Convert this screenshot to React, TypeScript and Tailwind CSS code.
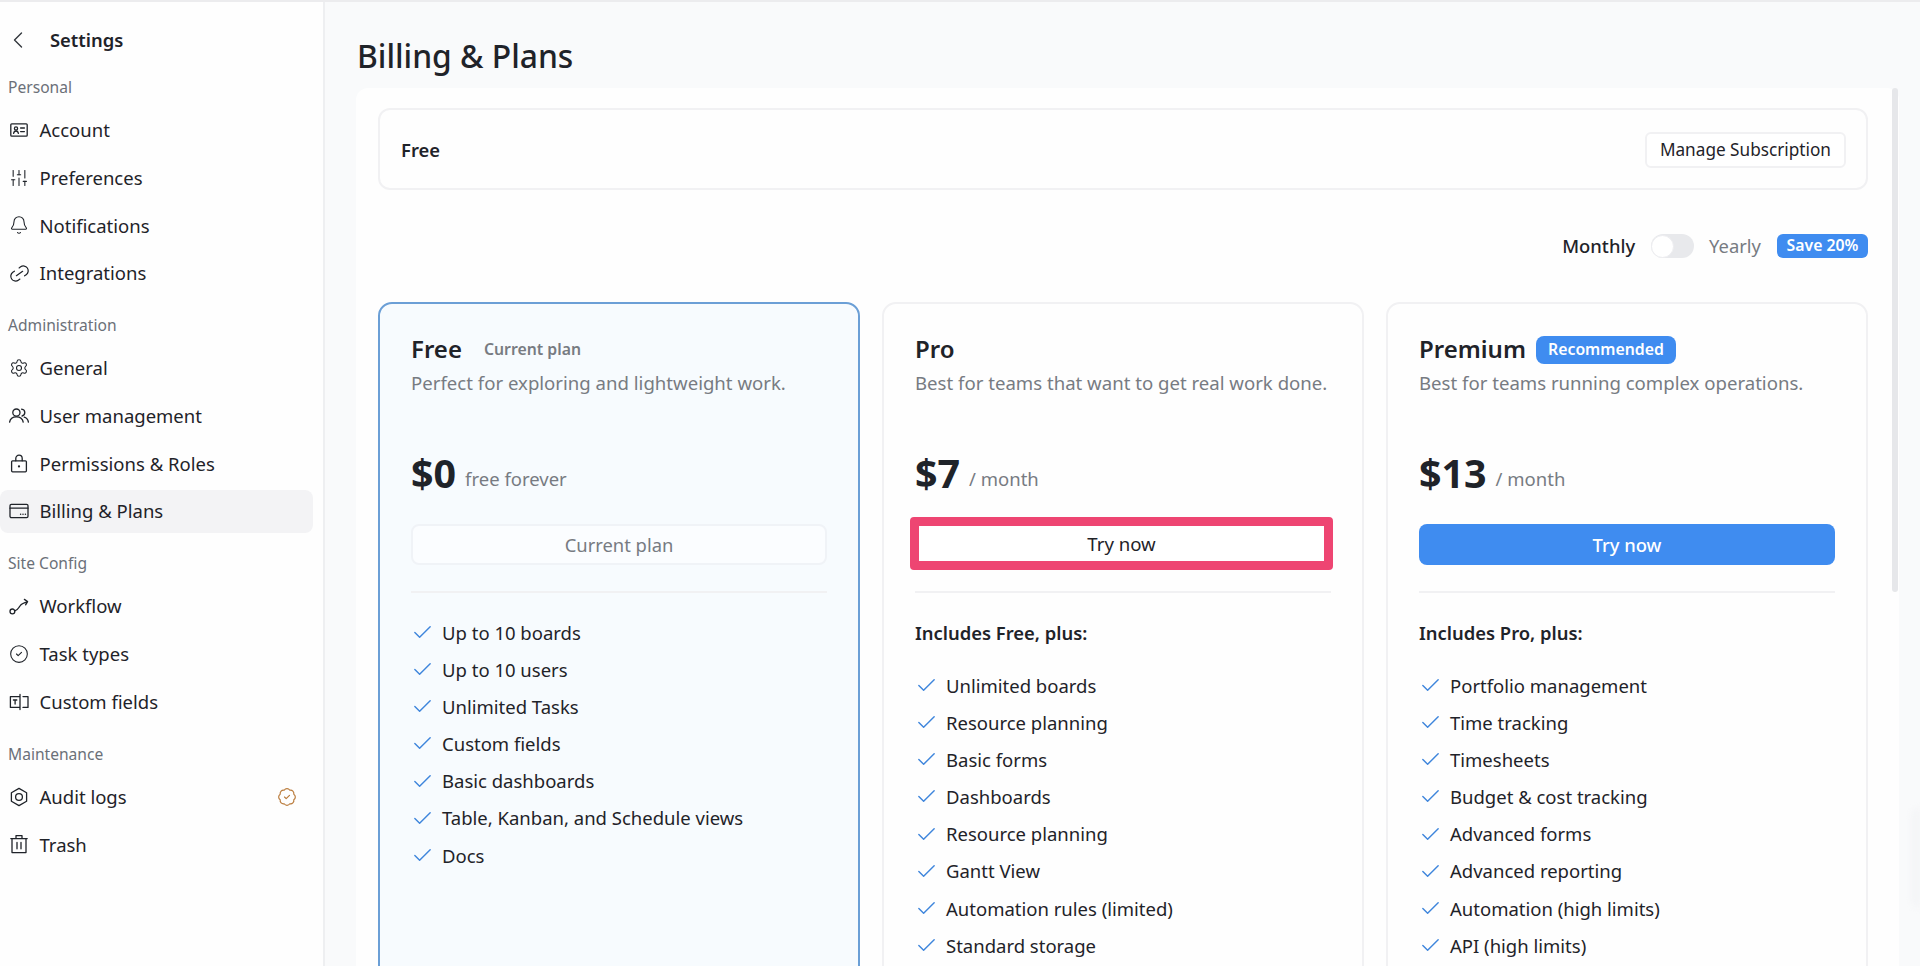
import React from 'react';
import { Bell, CircleCheck, Settings, SlidersVertical, BadgeCheck, Check, ChevronLeft, Link2 } from 'lucide-react';

const IconBase: React.FC<{ children: React.ReactNode }> = ({ children }) => (
  <svg width="22" height="22" viewBox="0 0 22 22" fill="none" stroke="currentColor" strokeWidth="1.3" strokeLinecap="round" strokeLinejoin="round">
    {children}
  </svg>
);

const AccountIcon = () => (
  <IconBase>
    <rect x="2.8" y="4.8" width="16.4" height="12.4" rx="1" />
    <circle cx="8" cy="9.4" r="1.6" />
    <path d="M5.6 14.4c.3-1.6 1.2-2.4 2.4-2.4s2.1.8 2.4 2.4M12.6 9h3.8M12.6 12.6h3.8" />
  </IconBase>
);

const UsersIcon = () => (
  <IconBase>
    <circle cx="8.4" cy="7.6" r="3.6" />
    <path d="M1.6 17.2c.5-3.2 3.2-5.4 6.8-5.4s6.3 2.2 6.8 5.4M13.6 4.2c1.9.2 3.2 1.6 3.2 3.4 0 1.7-1.1 3-2.7 3.4M16.2 12.2c2.3.6 3.8 2.4 4.2 5" />
  </IconBase>
);

const LockIcon = () => (
  <IconBase>
    <rect x="3.6" y="7.8" width="14.8" height="11" rx="1" />
    <path d="M7.8 7.8V5.4a3.2 3.2 0 0 1 6.4 0v2.4" />
    <circle cx="11" cy="13.4" r=".5" fill="currentColor" />
  </IconBase>
);

const BillingIcon = () => (
  <IconBase>
    <rect x="2" y="4.4" width="18" height="13.2" rx="1.4" />
    <path d="M2 8.2h18" />
    <path d="M12.6 14.2h.01M15 14.2h.01M17.4 14.2h.01" strokeWidth="1.5" />
  </IconBase>
);

const WorkflowIcon = () => (
  <IconBase>
    <circle cx="4.4" cy="16.4" r="2.4" />
    <path d="M6.8 15.8c3.2-.6 3.6-3 5.2-5 1.2-1.6 3.6-3.2 7.4-4M16.4 4.4l3.2 2.2-2 3.2" />
  </IconBase>
);

const FieldsIcon = () => (
  <IconBase>
    <path d="M12 5.6H2.4v10.8H12zM12 3.4v15.2M15 5.6h5v10.8h-5" />
    <path d="M5.4 9h3.4M7.1 9v4" />
  </IconBase>
);

const AuditIcon = () => (
  <IconBase>
    <path d="M11 2.4l7.6 4.3v8.6L11 19.6l-7.6-4.3V6.7z" />
    <circle cx="11" cy="11" r="3.4" />
  </IconBase>
);

const TrashIcon = () => (
  <IconBase>
    <path d="M4 5.6h14v14H4zM2.8 5.6h16.4M8 5.6V2.6h6v3M9 9.4v6.4M13 9.4v6.4" />
  </IconBase>
);

type NavEntry = { label: string; icon: React.ReactNode; active?: boolean; badge?: boolean };

const sections: { title: string; items: NavEntry[] }[] = [
  {
    title: 'Personal',
    items: [
      { label: 'Account', icon: <AccountIcon /> },
      { label: 'Preferences', icon: <SlidersVertical size={20} strokeWidth={1.3} /> },
      { label: 'Notifications', icon: <Bell size={20} strokeWidth={1.3} /> },
      { label: 'Integrations', icon: <Link2 size={23} strokeWidth={1.3} className="-rotate-[35deg]" /> },
    ],
  },
  {
    title: 'Administration',
    items: [
      { label: 'General', icon: <Settings size={20} strokeWidth={1.3} /> },
      { label: 'User management', icon: <UsersIcon /> },
      { label: 'Permissions & Roles', icon: <LockIcon /> },
      { label: 'Billing & Plans', icon: <BillingIcon />, active: true },
    ],
  },
  {
    title: 'Site Config',
    items: [
      { label: 'Workflow', icon: <WorkflowIcon /> },
      { label: 'Task types', icon: <CircleCheck size={20} strokeWidth={1.3} /> },
      { label: 'Custom fields', icon: <FieldsIcon /> },
    ],
  },
  {
    title: 'Maintenance',
    items: [
      { label: 'Audit logs', icon: <AuditIcon />, badge: true },
      { label: 'Trash', icon: <TrashIcon /> },
    ],
  },
];

const Sidebar: React.FC = () => (
  <aside className="w-[325px] shrink-0 border-r-2 border-[#eeeff1] bg-[#fefefe] text-[#1f2329]">
    <div className="flex h-[75px] items-center pl-[4px]">
      <ChevronLeft size={28} strokeWidth={1.2} className="text-[#33373d]" />
      <span className="ml-[18px] text-[18.4px] font-semibold">Settings</span>
    </div>
    <div className="flex flex-col gap-[18.2px]">
      {sections.map((section) => (
        <div key={section.title}>
          <div className="mb-[9px] h-[20px] pl-[8px] text-[15.6px] leading-[20px] text-[#6b7078]">{section.title}</div>
          {section.items.map((item) => (
            <div key={item.label} className="flex h-[47.75px] items-center">
              <div className={`flex h-[43px] w-[313px] items-center rounded-lg pl-[7px] pr-[16px] ${item.active ? 'bg-[#f3f3f5]' : ''}`}>
                <span className="flex w-[24px] justify-center">{item.icon}</span>
                <span className="ml-[8.5px] text-[18.5px]">{item.label}</span>
                {item.badge && <BadgeCheck size={20} strokeWidth={1.4} className="ml-auto text-[#b97a3a]" />}
              </div>
            </div>
          ))}
        </div>
      ))}
    </div>
  </aside>
);

const FeatureList: React.FC<{ items: string[] }> = ({ items }) => (
  <ul>
    {items.map((item, i) => (
      <li key={i} className="flex h-[37.15px] items-center gap-[8px] text-[18.5px] text-[#1f2329]">
        <Check size={23} strokeWidth={1.5} className="shrink-0 text-[#3f86dc]" />
        <span>{item}</span>
      </li>
    ))}
  </ul>
);

const PlanName: React.FC<{ children: React.ReactNode }> = ({ children }) => (
  <span className="-mt-[2px] text-[24px] leading-[28px] font-semibold text-[#1f2329]">{children}</span>
);

const PlanSummary: React.FC<{ text: string; price: string; unit: string }> = ({ text, price, unit }) => (
  <>
    <p className="mt-[7px] h-[24px] text-[18.6px] leading-[24px] text-[#777b82]">{text}</p>
    <div className="mt-[54px] flex h-[50px] items-center gap-[9px]">
      <span className="-mt-[2px] text-[39.4px] leading-[50px] font-bold text-[#1f2329]">{price}</span>
      <span className="mt-[9px] text-[18.5px] text-[#777b82]">{unit}</span>
    </div>
  </>
);

const Divider = () => <div className="mt-[26px] h-[2px] bg-[#f1f1f3]" />;

const Billing: React.FC = () => (
  <main className="relative min-w-0 flex-1 bg-[#f9fafb]">
    <h1 className="flex h-[86px] items-center pl-[32px] pt-[21px] text-[31.8px] font-medium text-[#1f2329]">Billing &amp; Plans</h1>
    <section className="relative ml-[31px] mr-[21px] rounded-t-xl bg-[#fefefe] pl-[22px] pr-[31px] pt-[20px]">
      <div className="absolute right-[1px] top-0 h-[504px] w-[6px] rounded-full bg-[#e6e7ea]" />
      <div className="flex h-[82px] items-center justify-between rounded-xl border-2 border-[#f1f1f3] pl-[21px] pr-[20px]">
        <span className="mt-[1px] text-[18.4px] font-semibold text-[#1f2329]">Free</span>
        <button className="mt-[1px] h-[36px] rounded-md border-2 border-[#f1f1f3] bg-white px-[13px] text-[17.2px] text-[#1f2329]">Manage Subscription</button>
      </div>

      <div className="mt-[44px] flex h-[24px] items-center justify-end">
        <span className="text-[18.4px] font-medium text-[#1f2329]">Monthly</span>
        <span className="ml-[16px] flex h-[24px] w-[43px] items-center rounded-full bg-[#e8e9ec]">
          <span className="h-[23px] w-[23px] rounded-full border border-[#ededf0] bg-white" />
        </span>
        <span className="ml-[15px] text-[18.4px] text-[#777b82]">Yearly</span>
        <span className="ml-[16px] flex h-[24px] w-[91px] items-center justify-center rounded-md bg-[#3f8cf0] text-[15.8px] font-semibold text-white">Save 20%</span>
      </div>

      <div className="mt-[44px] grid grid-cols-3 gap-[22px] pb-[60px]">
        <div className="rounded-[14px] border-2 border-[#6b9fd6] bg-[#f7fbfe] px-[31px] pb-[60px] pt-[32px]">
          <div className="flex h-[28px] items-center gap-[22px]">
            <PlanName>Free</PlanName>
            <span className="text-[15.8px] font-semibold text-[#777b82]">Current plan</span>
          </div>
          <PlanSummary text="Perfect for exploring and lightweight work." price="$0" unit="free forever" />
          <button className="mt-[25px] h-[41px] w-full rounded-lg border-2 border-[#f0f3f7] bg-[#fbfdff] text-[18.4px] text-[#777b82]">Current plan</button>
          <Divider />
          <div className="mt-[21px]">
            <FeatureList items={['Up to 10 boards', 'Up to 10 users', 'Unlimited Tasks', 'Custom fields', 'Basic dashboards', 'Table, Kanban, and Schedule views', 'Docs']} />
          </div>
        </div>

        <div className="rounded-[14px] border-2 border-[#f1f1f3] bg-[#fefefe] px-[31px] pb-[60px] pt-[32px]">
          <div className="flex h-[28px] items-center">
            <PlanName>Pro</PlanName>
          </div>
          <PlanSummary text="Best for teams that want to get real work done." price="$7" unit="/ month" />
          <button className="mb-[-5px] ml-[-5px] mr-[-4px] mt-[18px] block h-[53px] w-[423px] rounded border-[9px] border-[#ee4572] bg-white text-[18.6px] text-[#1f2329]">Try now</button>
          <Divider />
          <p className="mt-[27.5px] h-[24px] text-[18.4px] leading-[24px] font-semibold text-[#1f2329]">Includes Free, plus:</p>
          <div className="mt-[22.5px]">
            <FeatureList items={['Unlimited boards', 'Resource planning', 'Basic forms', 'Dashboards', 'Resource planning', 'Gantt View', 'Automation rules (limited)', 'Standard storage']} />
          </div>
        </div>

        <div className="rounded-[14px] border-2 border-[#f1f1f3] bg-[#fefefe] px-[31px] pb-[60px] pt-[32px]">
          <div className="flex h-[28px] items-center gap-[10px]">
            <PlanName>Premium</PlanName>
            <span className="flex h-[28px] w-[140px] items-center justify-center rounded-lg bg-[#3f8cf0] text-[15.8px] font-semibold text-white">Recommended</span>
          </div>
          <PlanSummary text="Best for teams running complex operations." price="$13" unit="/ month" />
          <button className="mt-[25px] h-[41px] w-full rounded-lg bg-[#3f8cf0] text-[18.4px] font-medium text-white">Try now</button>
          <Divider />
          <p className="mt-[27.5px] h-[24px] text-[18.4px] leading-[24px] font-semibold text-[#1f2329]">Includes Pro, plus:</p>
          <div className="mt-[22.5px]">
            <FeatureList items={['Portfolio management', 'Time tracking', 'Timesheets', 'Budget & cost tracking', 'Advanced forms', 'Advanced reporting', 'Automation (high limits)', 'API (high limits)']} />
          </div>
        </div>
      </div>
    </section>
    <div className="absolute right-0 top-[806px] h-[100px] w-[8px] rounded-l-full bg-[#f3f4f6] blur-[3px]" />
  </main>
);

export default function App() {
  return (
    <div className="flex h-screen flex-col overflow-hidden font-['Noto_Sans',sans-serif]">
      <div className="h-[2px] shrink-0 bg-[#ececee]" />
      <div className="flex min-h-0 flex-1">
        <Sidebar />
        <Billing />
      </div>
    </div>
  );
}
